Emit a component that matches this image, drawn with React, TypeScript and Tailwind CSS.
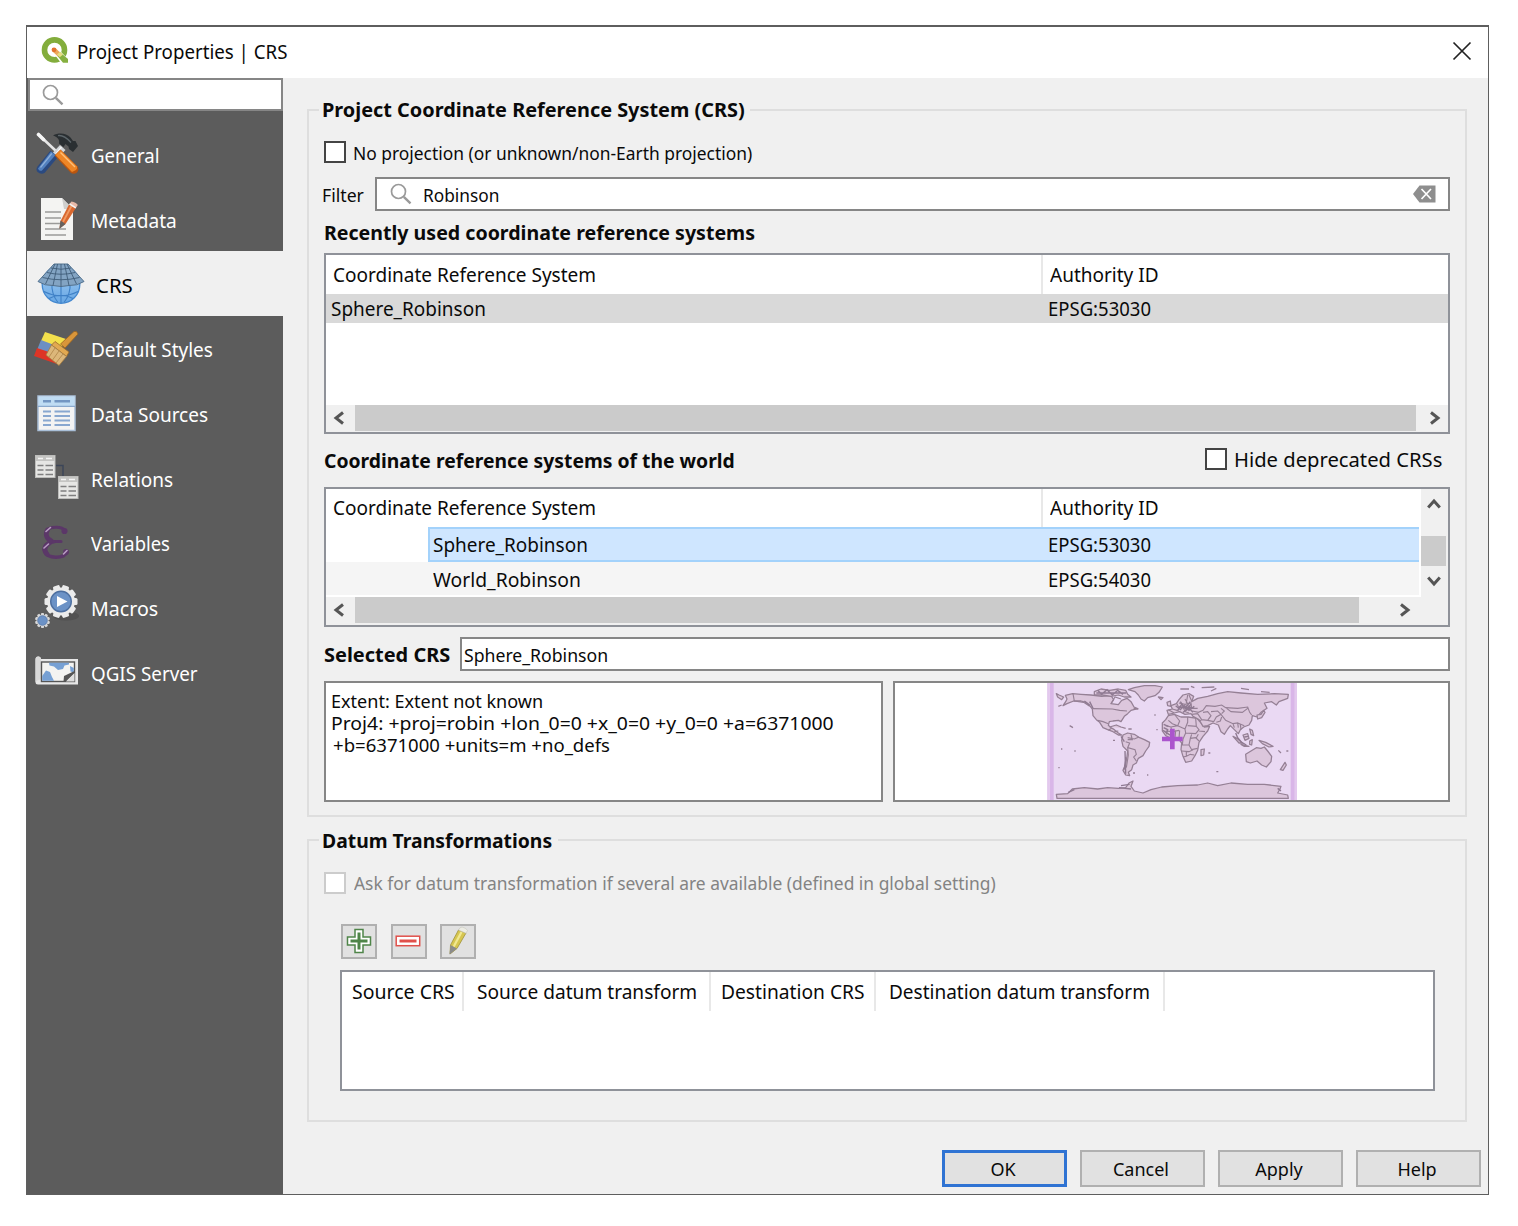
import React from "react";

/* ---------- shared pieces ---------- */

function T({ c = "", children }: { c?: string; children: React.ReactNode }) {
  return <span className={"inline-block origin-left whitespace-pre " + c}>{children}</span>;
}

function Magnifier() {
  return (
    <svg width="22" height="22" viewBox="0 0 22 22" fill="none" stroke="#9a9a9a">
      <circle cx="8.5" cy="8.5" r="7" strokeWidth="1.7" />
      <path d="M13.8 13.8 L20.5 20.3" strokeWidth="2.4" />
    </svg>
  );
}

function Chevron({ d }: { d: string }) {
  return (
    <svg width="14" height="14" viewBox="0 0 14 14" fill="none" stroke="#555" strokeWidth="3">
      <path d={d} />
    </svg>
  );
}
const LEFT = "M11 1.5 L4 7 L11 12.5";
const RIGHT = "M3 1.5 L10 7 L3 12.5";
const UP = "M1.2 10.5 L7 4 L12.8 10.5";
const DOWN = "M1.2 3.5 L7 10 L12.8 3.5";

/* ---------- icons ---------- */

function QgisLogo() {
  return (
    <svg width="28" height="28" viewBox="0 0 28 28">
      <circle cx="13.500" cy="12.900" r="10" fill="none" stroke="#83ad3c" strokeWidth="5.600" />
      <path d="M15 14 L19 14 L28 23 L28 26 L20 26 L14 18 Z" fill="#fff" />
      <path d="M15.500 17.800 L18.500 14.700 L27 22 L27 25.800 L22 25.800 Z" fill="#86b03f" />
      <path d="M11.500 11.500 L14.500 11 L20 16.500 L17 19.500 L11.500 14.500 Z" fill="#eda65a" />
      <circle cx="13" cy="12.800" r="2.400" fill="#e2722e" />
      <path d="M16 17.500 L19 14.800 L22 17.500 L18.800 20.300 Z" fill="#e6dd80" />
    </svg>
  );
}

function GeneralIcon() {
  return (
    <svg width="44" height="44" viewBox="0 0 44 44">
      <path d="M3 3 L20 19" stroke="#e6e6e6" strokeWidth="2.600" fill="none" strokeLinecap="round" />
      <path d="M2.500 2.500 L7.500 7.500" stroke="#f6f6f6" strokeWidth="3.600" strokeLinecap="round" />
      <path d="M24 13 L29.500 18 L22 26 L17 20.500 Z" fill="#d3d6d9" />
      <path d="M25.500 15 L20 22" stroke="#f4f5f6" strokeWidth="1.500" />
      <path d="M17 3.500 C23 .3 30 1 34.500 5.500 L37 9 L39.500 9 L42 14 L37 20 L33 17 L32.500 14.500 L29.500 12 L27.500 15 L23 11.500 C24 7 21 5 17 3.500 Z" fill="#2a2f32" />
      <path d="M22 3.600 C27 2.800 31 6 35 10.500" stroke="#5d666b" strokeWidth="1.300" fill="none" />
      <path d="M14.500 18.500 L22 25 L8.500 41 Q5 43 1.500 40 Q-.5 37.500 1.500 34.500 Z" fill="#2b4a80" />
      <path d="M15 19.500 L19.500 23 L6 38.500 Q3 39.500 2 36.500 Z" fill="#5280be" />
      <path d="M15.800 21.500 L4.500 35.500" stroke="#8fb0da" strokeWidth="1.200" />
      <path d="M18.500 23.500 L24.500 17.500 L41.500 34.500 Q43.500 37.500 41 40.500 Q38 42.800 35 41 Z" fill="#b9550f" />
      <path d="M19.500 23 L24.500 18 L41 34.500 Q41.500 36.500 40 38 L36 40 Z" fill="#ee8626" />
      <path d="M24.500 20.500 L39 35" stroke="#ffc079" strokeWidth="1.400" />
    </svg>
  );
}

function MetadataIcon() {
  return (
    <svg width="40" height="44" viewBox="0 0 40 44">
      <path d="M1 1 H22 L33 12 V43 H1 Z" fill="#f4f4f2" />
      <path d="M22 1 L33 12 H24 Z" fill="#cfcfcd" />
      <path d="M5 15 H21 M5 21 H21 M5 26.500 H21 M5 32 H26 M5 38 H26" stroke="#9b9b99" strokeWidth="1.500" />
      <path d="M29 7.500 L35.500 11.500 L25.500 27 L19.500 31.500 L20.500 24 Z" fill="#d9682f" />
      <path d="M31.500 9 L23 25" stroke="#f09a63" strokeWidth="1.800" />
      <path d="M20.500 23.500 L25.500 27 L19.300 32 Z" fill="#66625f" />
      <path d="M29 7.500 L31.500 4.500 Q36 5 37.800 8 L35.500 11.500 Z" fill="#e7b9a8" />
      <path d="M29.500 6.800 L35.800 10.900" stroke="#f3f3f3" strokeWidth="1.500" />
    </svg>
  );
}

function CrsIcon() {
  return (
    <svg width="48" height="42" viewBox="0 0 48 42">
      <defs>
        <linearGradient id="sphere" x1="0" y1="0" x2="0" y2="1">
          <stop offset="0" stopColor="#a9d0f3" />
          <stop offset="1" stopColor="#66a6e4" />
        </linearGradient>
      </defs>
      <circle cx="24" cy="21.500" r="18.800" fill="url(#sphere)" stroke="#4287cf" strokeWidth="1.300" />
      <path d="M24 18 V40 M15 19 Q14 31 21 39.500 M33 19 Q34 31 27 39.500 M7 28.500 Q24 37 41 28.500 M12 35.500 Q24 29 36 35.500" stroke="#3f80c6" strokeWidth="1.100" fill="none" />
      <path d="M17 1 H31 L47 18.500 Q40 23 32 22.500 Q24 24.500 16 22.500 Q8 23 1 18.500 Z" fill="#83a4c3" stroke="#53728f" strokeWidth="1" />
      <path d="M20.500 1 L16 22.500 M27.500 1 L32 22.500 M24 1 V23.500 M18 1 L8.500 21 M30 1 L39.500 21 M14 5 Q24 7.500 34 5 M10 9.500 Q24 13 38 9.500 M5.500 14.500 Q24 19 42.500 14.500" stroke="#3f5c78" strokeWidth=".9" fill="none" />
    </svg>
  );
}

function StylesIcon() {
  return (
    <svg width="46" height="36" viewBox="0 0 46 36">
      <path d="M12 2 L33 9 L28 19 L8 11 Z" fill="#f3e04c" />
      <path d="M8 10 L29 18 L22 28 L4 20 Z" fill="#6c8fc2" />
      <path d="M4 18 L22 24 L24 34 L1 26 Z" fill="#dd3526" />
      <path d="M43.500 1.500 L45 4 L32 18 L27.500 14 L41 1.500 Z" fill="#d9963a" stroke="#9a6420" strokeWidth=".8" />
      <path d="M22 11.500 L36 22 L33.500 26.500 L18.500 15 Z" fill="#e2a951" stroke="#9a6a28" strokeWidth=".8" />
      <path d="M18.500 15 L33.500 26.500 L26 35.500 L13 25 Z" fill="#dcb77a" stroke="#a67c40" strokeWidth=".8" />
      <path d="M22 18 L16 27 M26 21 L19.500 30 M30 24 L23 33" stroke="#b98f52" strokeWidth="1" />
    </svg>
  );
}

function DataIcon() {
  return (
    <svg width="40" height="37" viewBox="0 0 40 37">
      <rect x="1" y="1" width="37" height="34.500" fill="#f3f3f3" stroke="#a9bfd8" strokeWidth="1.500" />
      <rect x="1.500" y="1.500" width="36" height="9.500" fill="#bfdcf3" />
      <path d="M1 11.300 H38" stroke="#8aa9cd" strokeWidth="1.200" />
      <path d="M6 6.300 H14 M17.500 6.300 H33" stroke="#7396c2" strokeWidth="2.400" />
      <path d="M6 16.500 H14 M17.500 16.500 H33 M6 21 H14 M17.500 21 H33 M6 25.500 H14 M17.500 25.500 H33 M6 30 H14 M17.500 30 H33" stroke="#88a7d0" strokeWidth="1.900" />
    </svg>
  );
}

function MiniTable({ x, y }: { x: number; y: number }) {
  return (
    <g transform={`translate(${x} ${y})`}>
      <rect x=".5" y=".5" width="19.500" height="22" fill="#e6e6e4" stroke="#bdbdbb" />
      <rect x="1" y="1" width="18.500" height="5" fill="#c4c4c2" />
      <path d="M3 3.500 H8 M11 3.500 H17" stroke="#f4f4f4" strokeWidth="1.600" />
      <path d="M2.500 10.500 H8.500 M10.500 10.500 H18 M2.500 15 H8.500 M10.500 15 H18 M2.500 19.500 H8.500 M10.500 19.500 H18" stroke="#7f7f7f" strokeWidth="1.500" />
    </g>
  );
}

function RelationsIcon() {
  return (
    <svg width="44" height="45" viewBox="0 0 44 45">
      <path d="M21 10.500 H28 V21" stroke="#3c4658" strokeWidth="1.500" fill="none" />
      <MiniTable x={0} y={0} />
      <MiniTable x={23} y={21} />
    </svg>
  );
}

function VariablesIcon() {
  return (
    <svg width="28" height="35" viewBox="0 0 28 35" fill="none" strokeLinecap="round">
      <path d="M23 5.500 C20 1.500 9 1 5.500 5 C2.500 10 6 16 12 16.500 H19" stroke="#5b3768" strokeWidth="3.200" />
      <path d="M12 16.800 C5 17 .5 22 2.500 26.500 C5.500 34 22 34 25 27" stroke="#5b3768" strokeWidth="3.400" />
      <path d="M5.500 5 C3 9 4.500 13.500 8.500 15.500 M7.500 18 C3 20.500 1.500 25 5 29" stroke="#5b3768" strokeWidth="4.800" />
      <circle cx="22.500" cy="6" r="3.100" fill="#5b3768" />
      <circle cx="24" cy="27" r="2.900" fill="#5b3768" />
      <path d="M4 6.500 L8.500 2.500 M2 23 L6.500 19 M21.500 29 L25 25.500" stroke="#b79bc2" strokeWidth="1.600" />
    </svg>
  );
}

function MacrosIcon() {
  const teeth = [0, 36, 72, 108, 144, 180, 216, 252, 288, 324];
  return (
    <svg width="46" height="46" viewBox="0 0 46 46">
      <ellipse cx="31" cy="32" rx="13" ry="4.500" fill="#4a4a4a" opacity=".6" />
      {teeth.map((a) => (
        <rect key={a} x="22.500" y="1" width="7" height="8" rx="1.500" fill="#ebebeb" transform={`rotate(${a + 18} 26 17.500)`} />
      ))}
      <circle cx="26" cy="17.500" r="14" fill="#ebebeb" />
      <circle cx="26" cy="17.500" r="10.300" fill="#6c92c6" stroke="#4d6fa0" strokeWidth="1.400" />
      <path d="M22 12 L32.500 17.500 L22 23 Z" fill="#fff" />
      {teeth.map((a) => (
        <rect key={a} x="6" y="29" width="3" height="4" rx=".8" fill="#d8d8d8" transform={`rotate(${a} 7.500 36.500)`} />
      ))}
      <circle cx="7.500" cy="36.500" r="6" fill="#d8d8d8" />
      <circle cx="7.500" cy="36.500" r="4.800" fill="#6c92c6" stroke="#5577a8" strokeWidth=".8" />
    </svg>
  );
}

function ServerIcon() {
  return (
    <svg width="44" height="31" viewBox="0 0 44 31">
      <path d="M5 3 H43 V28.500 H3 Q.5 28.500 .5 26 V3.500 Q.5 .5 3.200 .5 Q6 .5 6 3.500 Z" fill="#e7e7e7" />
      <path d="M3.200 .5 Q6 .5 6 3.500 V23.500 Q3 23 .5 26 V3.500 Q.5 .5 3.200 .5" fill="#d9d9d9" />
      <rect x="6.500" y="6" width="33" height="19.500" fill="#f3f3f1" stroke="#555" strokeWidth="1.400" />
      <path d="M14 6.700 H34 V8.500 L29.500 9.500 L28 13 L23 14 L19 10.500 L14.500 9.500 Z M7.200 24.800 V20 L11 14.500 L15 16 L17 21 L19 24.800 Z M35 10 L38.800 12 V16.500 L35.500 15.500 Z" fill="#76a0d4" />
      <path d="M28.500 25.500 L29 20 L39.500 15 V17.500 L31 25.500 Z" fill="#555" />
      <path d="M39.500 17 V25.500 H31 Z" fill="#dedede" />
    </svg>
  );
}

/* ---------- world overview ---------- */

const LAND = [
  "M103 73 L125 68 L150 70 L180 72 L212 76 L240 74 L248 86 L240 98 L262 101 L272 88 L288 82 L300 92 L309 108 L320 113 L300 118 L290 128 L280 136 L270 152 L262 148 L246 150 L235 152 L232 163 L240 170 L250 176 L262 186 L272 192 L262 192 L246 182 L230 176 L216 170 L206 154 L196 146 L186 134 L184 114 L176 104 L164 94 L150 90 L128 90 L108 98 L96 104 L104 92 L108 84 Z",
  "M76 68 L84 72 L98 78 L92 86 L80 78 Z",
  "M292 56 L310 50 L340 44 L372 44 L394 48 L384 64 L372 74 L350 80 L340 90 L330 84 L322 72 L312 62 Z",
  "M190 62 L210 54 L236 58 L262 54 L284 58 L290 70 L300 78 L280 78 L262 72 L240 76 L214 72 L190 72 Z",
  "M276 192 L290 186 L310 190 L326 200 L340 206 L356 214 L354 226 L344 240 L336 254 L322 262 L316 276 L306 282 L302 296 L292 304 L296 314 L284 312 L276 298 L284 280 L288 256 L290 240 L276 226 L272 208 Z",
  "M394 156 L404 146 L412 134 L430 130 L450 138 L472 138 L498 142 L512 158 L520 168 L536 166 L530 180 L516 196 L504 214 L500 238 L492 254 L482 270 L464 274 L456 256 L450 236 L452 216 L444 206 L420 202 L404 194 L394 180 Z",
  "M412 130 L408 118 L424 114 L420 104 L436 98 L444 86 L456 72 L474 68 L488 76 L482 92 L500 82 L530 76 L560 68 L590 62 L630 66 L680 70 L730 68 L772 70 L770 82 L744 92 L736 102 L722 92 L700 96 L708 112 L690 124 L678 138 L664 134 L662 148 L654 162 L638 168 L628 176 L622 188 L610 176 L598 164 L590 174 L580 190 L570 182 L562 162 L546 156 L530 164 L516 166 L504 146 L486 136 L480 128 L462 130 L446 122 L430 126 Z",
  "M644 250 L660 240 L676 230 L690 232 L700 228 L710 240 L722 256 L720 272 L706 288 L692 282 L678 270 L658 276 L646 272 Z",
  "M76 370 L110 368 L124 354 L160 350 L200 354 L230 350 L262 352 L284 350 L294 336 L306 330 L300 346 L310 360 L336 366 L360 356 L392 348 L440 344 L500 342 L530 336 L560 344 L600 336 L650 340 L700 340 L750 346 L746 356 L740 366 L770 372 L772 382 L78 382 Z",
];
const ISLES = [
  "M606 196 L618 202 L634 216 L624 216 Z",
  "M636 192 L650 188 L654 202 L642 208 Z",
  "M630 220 L654 226 L640 226 Z",
  "M656 210 L664 206 L662 222 L656 220 Z",
  "M684 208 L704 214 L726 226 L714 228 L694 218 Z",
  "M656 174 L664 178 L668 194 L660 190 Z",
  "M678 132 L690 130 L698 118 L702 124 L692 140 L680 144 Z",
  "M510 236 L520 234 L518 252 L510 254 Z",
  "M762 274 L766 282 L756 298 L748 296 Z",
  "M408 94 L418 90 L420 106 L410 104 Z",
  "M382 78 L396 80 L390 86 Z",
  "M236 168 L256 162 L270 168 L284 172 M292 174 L302 174",
  "M448 54 H474 M512 50 L550 48 M540 60 L556 52 M630 52 L654 56 M690 62 L716 64 M480 46 L490 50",
  "M82 106 L92 102 M116 164 L126 170 M90 234 H94 M130 240 H134 M82 290 H86 M246 208 H252 M306 306 H312 M350 310 V314 M370 132 H374 M376 176 H380 M532 246 H538 M556 302 H562 M742 238 L750 246 M766 240 H772 M308 112 L322 114",
];
const BORDERS =
  "M126 68 L130 90 L158 94 L176 106 M186 113 L244 114 L266 118 L288 120 M200 148 L216 152 L232 158 M242 172 L232 178 M250 182 L262 180 M240 98 L252 78 L270 84 M290 200 L310 204 L324 198 M284 212 L296 216 L290 230 L312 236 L316 250 L308 258 L316 270 M290 230 L292 252 L286 290 M300 190 L304 206 L290 206 M404 164 L420 168 L440 164 L446 150 L432 132 M412 148 L424 158 L440 164 L462 174 L470 154 L470 138 M470 164 L496 166 L494 142 M462 174 L464 186 L494 188 L504 176 L496 166 M446 178 L444 202 M420 168 L424 196 M434 178 L432 200 M404 180 L424 182 L444 178 M464 186 L456 204 L454 222 L474 222 L478 202 L494 200 L504 210 M478 202 L482 190 M474 222 L482 236 L500 232 M452 240 L474 242 L486 236 M466 242 L466 256 L456 258 M466 256 L478 250 L490 252 M504 180 L522 182 M496 200 L502 190 M412 116 L430 126 M424 114 L438 118 L446 122 M438 98 L444 112 L456 108 L462 122 L474 126 M456 108 L470 104 L484 112 L500 112 M444 96 L462 100 L480 96 L482 112 M462 84 L470 98 M470 72 L466 96 M474 72 L482 90 M484 120 L502 124 L516 118 L526 104 L552 106 L572 102 L584 110 L620 112 L650 108 L656 124 L662 132 M482 130 L500 128 L512 146 L530 148 L540 134 L530 122 L516 124 M512 146 L504 152 M530 148 L548 152 L556 138 L570 130 L560 120 L540 122 M570 130 L584 148 L606 158 L620 156 L622 170 M570 112 L580 120 L572 128 M584 110 L600 122 L634 124 L650 112 M556 154 L568 150 L572 138 M606 158 L610 170 M620 156 L640 164 M628 160 L630 176";
const DENSE =
  "M434 104 L448 116 L460 104 L474 118 L490 106 M440 118 L452 100 L466 116 L480 100 M448 92 L462 112 L478 92 M456 124 L474 112 L486 124 M444 108 L486 110 M614 186 L620 200 L632 214 L646 222 M640 198 L652 196 M398 160 L412 166 M398 170 L410 176 L406 190 M396 178 L414 190 L428 198 M176 92 L186 112 M160 90 L176 102 M196 66 L286 66 M200 58 L212 70 L228 56 L244 72 L260 58 L276 70 M282 240 L284 308 M284 258 L280 296 M270 196 L280 212 M112 364 L130 356 M264 350 L300 354 M270 344 L296 340 M740 352 L750 360";

function WorldMap() {
  return (
    <svg width="250" height="117" viewBox="48 36 750 351" preserveAspectRatio="none" className="block">
      <rect x="48" y="36" width="750" height="354" fill="#ead9f3" />
      <path d="M62 36 V390 M785 36 V390" stroke="#d9b6e8" strokeWidth="12" />
      <path d="M52 36 V390 M795 36 V390" stroke="#e3c9ee" strokeWidth="6" />
      <g fill="#dcc6dc" stroke="#958095" strokeWidth="3.800" strokeLinejoin="round">
        {LAND.map((d) => (
          <path key={d} d={d} />
        ))}
        {ISLES.map((d) => (
          <path key={d} d={d} />
        ))}
      </g>
      <path d={BORDERS} fill="none" stroke="#958095" strokeWidth="3.400" />
      <path d={DENSE} fill="none" stroke="#8f7a92" strokeWidth="4.200" />
      <path d="M424 173 V235 M393 204 H455" stroke="#ab55cd" strokeWidth="14" />
    </svg>
  );
}

/* ---------- sidebar ---------- */

type Item = { label: string; scale: string; icon: React.ReactNode; pad: string; active?: boolean };
const ITEMS: Item[] = [
  { label: "General", scale: "scale-x-[0.93]", icon: <GeneralIcon />, pad: "pl-[9px]" },
  { label: "Metadata", scale: "scale-x-[0.955]", icon: <MetadataIcon />, pad: "pl-[13px]" },
  { label: "CRS", scale: "scale-x-[1.02]", icon: <CrsIcon />, pad: "pl-[10px]", active: true },
  { label: "Default Styles", scale: "scale-x-[0.95]", icon: <StylesIcon />, pad: "pl-[6px]" },
  { label: "Data Sources", scale: "scale-x-[0.95]", icon: <DataIcon />, pad: "pl-[10px]" },
  { label: "Relations", scale: "scale-x-[0.95]", icon: <RelationsIcon />, pad: "pl-[8px]" },
  { label: "Variables", scale: "scale-x-[0.92]", icon: <VariablesIcon />, pad: "pl-[15px]" },
  { label: "Macros", scale: "scale-x-[0.98]", icon: <MacrosIcon />, pad: "pl-[8px]" },
  { label: "QGIS Server", scale: "scale-x-[0.94]", icon: <ServerIcon />, pad: "pl-[8px]" },
];

function Sidebar() {
  return (
    <nav className="flex w-[256px] flex-col bg-[#5c5c5c]">
      <div className="ml-px flex h-[33px] items-center border-2 border-[#868686] bg-white pl-[12px]">
        <Magnifier />
      </div>
      <div className="mt-[11px] flex flex-col text-[20px]">
        {ITEMS.map((it) => (
          <div key={it.label} className={"flex h-[64.7px] items-center " + (it.active ? "bg-[#f0f0f0] text-black" : "text-white")}>
            <div className={"flex shrink-0 items-center " + (it.active ? "w-[69px] " : "w-[64px] ") + it.pad}>{it.icon}</div>
            <T c={"pt-[4px] " + it.scale}>{it.label}</T>
          </div>
        ))}
      </div>
    </nav>
  );
}

/* ---------- controls ---------- */

function Check({ disabled }: { disabled?: boolean }) {
  return <span className={"h-[22px] w-[22px] shrink-0 border-2 bg-white " + (disabled ? "border-[#cccccc]" : "border-[#444444]")} />;
}

function HBar({ thumb, tail }: { thumb: string; tail: string }) {
  return (
    <div className="flex h-[27px] items-start bg-[#f0f0f0]">
      <div className="flex h-[26px] w-[29px] items-center pl-[6px]">
        <Chevron d={LEFT} />
      </div>
      <div className={"h-[26px] bg-[#cbcbcb] " + thumb} />
      <div className={"flex h-[26px] items-center " + tail}>
        <Chevron d={RIGHT} />
      </div>
    </div>
  );
}

function TreeHeader({ h }: { h: string }) {
  return (
    <div className={"flex shrink-0 items-center " + h}>
      <div className="flex h-full w-[717px] items-center border-r-2 border-[#e8e8e8] pl-[7px]">
        <T c="scale-x-[0.95]">Coordinate Reference System</T>
      </div>
      <div className="pl-[7px]">
        <T c="scale-x-[0.95]">Authority ID</T>
      </div>
    </div>
  );
}

function DialogButton({ label, primary }: { label: string; primary?: boolean }) {
  return (
    <button className={"flex h-[37px] w-[125px] items-center justify-center bg-[#e1e1e1] pr-[3px] " + (primary ? "border-[3px] border-[#2f73d3]" : "border-2 border-[#b0b0b0]")}>
      {label}
    </button>
  );
}

function ToolButton({ children }: { children: React.ReactNode }) {
  return <button className="flex h-[35px] w-[36px] items-center justify-center border-2 border-[#b0b0b0] bg-[#e1e1e1] pr-px pb-px">{children}</button>;
}

/* ---------- page ---------- */

export default function App() {
  return (
    <div className="h-[1226px] w-[1518px] bg-white pt-[25px] pl-[26px] font-['Noto_Sans','Open_Sans',sans-serif] text-[18px] leading-[22px] text-[#0a0a0a]">
      <div className="flex h-[1170px] w-[1463px] flex-col border border-t-2 border-[#5e5e5e]">
        <header className="flex h-[51px] shrink-0 items-center bg-white pb-[3px] pl-[14px] text-[20px]">
          <QgisLogo />
          <T c="ml-[8px] scale-x-[0.935] pt-px">Project Properties | CRS</T>
          <svg width="20" height="20" viewBox="0 0 20 20" className="mr-[16px] ml-auto" stroke="#222" strokeWidth="1.700">
            <path d="M1.500 1.500 L18.500 18.500 M18.500 1.500 L1.500 18.500" />
          </svg>
        </header>

        <div className="flex min-h-0 flex-1">
          <Sidebar />

          <main className="flex flex-1 flex-col bg-[#f0f0f0] pt-[21px] pl-[24px]">
            <fieldset className="h-[718px] w-[1160px] border-2 border-[#dedede] pl-[15px]">
              <legend className="ml-[-5px] h-[22px] w-[431px] pl-[3px] text-[19px] font-bold">
                <T c="scale-x-[1.046]">Project Coordinate Reference System (CRS)</T>
              </legend>

              <div className="mt-[13px] flex h-[36px] items-center">
                <Check />
                <T c="ml-[7px] scale-x-[0.966] pt-px">No projection (or unknown/non-Earth projection)</T>
              </div>

              <div className="mt-[7px] flex h-[34px] items-center">
                <T c="w-[51px] scale-x-[0.98] pt-[2px] -ml-[2px]">Filter</T>
                <div className="ml-[2px] flex h-full w-[1075px] items-center border-2 border-[#868686] bg-white pl-[13px]">
                  <Magnifier />
                  <T c="ml-[11px] scale-x-[0.96] pt-[2px]">Robinson</T>
                  <svg width="23" height="18" viewBox="0 0 23 18" className="mr-[12px] ml-auto">
                    <path d="M0 9 L6.500 .5 H22.500 V17.500 H6.500 Z" fill="#8e8e8e" />
                    <path d="M8.500 4 L18 14 M18 4 L8.500 14" stroke="#fff" strokeWidth="1.700" />
                  </svg>
                </div>
              </div>

              <div className="flex h-[42px] items-center pt-px text-[19px] font-bold">
                <T c="scale-x-[1.03]">Recently used coordinate reference systems</T>
              </div>

              <div className="flex h-[181px] w-[1126px] flex-col border-2 border-[#8f9299] bg-white text-[20px]">
                <TreeHeader h="h-[39px]" />
                <div className="flex h-[29px] items-center bg-[#d9d9d9] pl-[5px]">
                  <div className="w-[717px]">
                    <T c="scale-x-[0.948]">Sphere_Robinson</T>
                  </div>
                  <T c="scale-x-[0.925]">EPSG:53030</T>
                </div>
                <div className="mt-auto">
                  <HBar thumb="w-[1061px]" tail="pl-[12px]" />
                </div>
              </div>

              <div className="flex h-[53px] w-[1126px] items-center text-[19px]">
                <T c="scale-x-[1.017] font-bold">Coordinate reference systems of the world</T>
                <div className="mr-[10px] ml-auto flex items-center pb-[4px] text-[20px]">
                  <Check />
                  <T c="ml-[7px] scale-x-[1.01] pt-[3px]">Hide deprecated CRSs</T>
                </div>
              </div>

              <div className="flex h-[140px] w-[1126px] flex-col border-2 border-[#8f9299] bg-white text-[20px]">
                <div className="flex h-[108px]">
                  <div className="flex w-[1093px] flex-col">
                    <TreeHeader h="h-[38px]" />
                    <div className="ml-[102px] flex h-[35px] items-center border-2 border-[#a3d2fb] border-r-0 bg-[#cfe6ff] pl-[3px]">
                      <div className="w-[615px] pt-px">
                        <T c="scale-x-[0.948]">Sphere_Robinson</T>
                      </div>
                      <T c="scale-x-[0.925] pt-px">EPSG:53030</T>
                    </div>
                    <div className="flex h-[33px] items-center bg-[#f5f5f5] pl-[107px]">
                      <div className="w-[615px] pt-[2px]">
                        <T c="scale-x-[0.965]">World_Robinson</T>
                      </div>
                      <T c="scale-x-[0.925] pt-[2px]">EPSG:54030</T>
                    </div>
                  </div>
                  <div className="ml-[2px] flex flex-1 flex-col items-center bg-[#f0f0f0] pt-[8px] pr-[2px]">
                    <Chevron d={UP} />
                    <div className="mt-[25px] mb-[8px] h-[30px] w-[25px] bg-[#cbcbcb]" />
                    <Chevron d={DOWN} />
                  </div>
                </div>
                <HBar thumb="w-[1004px]" tail="pl-[39px]" />
                <div className="flex-1 bg-[#f0f0f0]" />
              </div>

              <div className="mt-[10px] flex h-[34px] items-center">
                <T c="w-[136px] scale-x-[1.05] text-[19px] font-bold pt-[2px]">Selected CRS</T>
                <div className="flex h-full w-[990px] items-center border-2 border-[#868686] bg-white pl-[2px]">
                  <T c="scale-x-[0.98] pt-[2px]">Sphere_Robinson</T>
                </div>
              </div>

              <div className="mt-[10px] flex h-[121px] gap-[10px]">
                <div className="flex w-[559px] flex-col border-2 border-[#868686] bg-white pt-[7px] pl-[5px]">
                  <T c="scale-x-[1.003]">Extent: Extent not known</T>
                  <T c="scale-x-[1.077]">Proj4: +proj=robin +lon_0=0 +x_0=0 +y_0=0 +a=6371000</T>
                  <T c="scale-x-[1.03] pl-[2px]">+b=6371000 +units=m +no_defs</T>
                </div>
                <div className="flex w-[557px] border-2 border-[#868686] bg-white pl-[152px]">
                  <WorldMap />
                </div>
              </div>
            </fieldset>

            <fieldset className="mt-[12px] h-[293px] w-[1160px] border-2 border-[#dedede] pl-[15px]">
              <legend className="ml-[-5px] h-[22px] w-[239px] pt-px pl-[3px] text-[19px] font-bold">
                <T c="scale-x-[1.018]">Datum Transformations</T>
              </legend>

              <div className="mt-[14px] flex h-[36px] items-center text-[#838383]">
                <Check disabled />
                <T c="ml-[8px] scale-x-[0.967]">Ask for datum transformation if several are available (defined in global setting)</T>
              </div>

              <div className="mt-[23px] ml-[17px] flex gap-[13.500px]">
                <ToolButton>
                  <svg width="26" height="26" viewBox="0 0 26 26" fill="none" stroke="#4f8549">
                    <path d="M9 1.500 H17 V9 H24.500 V17 H17 V24.500 H9 V17 H1.500 V9 H9 Z" fill="#fff" strokeWidth="1.500" />
                    <path d="M13 4.500 V21.500 M4.500 13 H21.500" strokeWidth="3" />
                  </svg>
                </ToolButton>
                <ToolButton>
                  <svg width="26" height="12" viewBox="0 0 26 12" fill="#fff" stroke="#e0504b">
                    <rect x="1.200" y="1.200" width="23.500" height="9.500" strokeWidth="1.500" />
                    <path d="M4.500 6 H21.500" strokeWidth="3" />
                  </svg>
                </ToolButton>
                <ToolButton>
                  <svg width="24" height="30" viewBox="0 0 24 30">
                    <path d="M12.500 4 L20 7 L11 22.500 L4 28 L4.500 19 Z" fill="#d6c650" stroke="#a0923a" strokeWidth=".8" />
                    <path d="M15.500 6 L7.500 21" stroke="#f1e891" strokeWidth="2.200" />
                    <path d="M4.500 19 L11 22.500 L3.500 28.500 Z" fill="#8b8b8b" />
                    <path d="M12.500 4 Q13.500 1.300 16 1 Q20.500 2 21.500 4.500 L20 7.300 Z" fill="#ecece4" stroke="#c4c4bb" strokeWidth=".6" />
                  </svg>
                </ToolButton>
              </div>

              <div className="mt-[11px] ml-[16px] h-[121px] w-[1095px] border-2 border-[#8f9299] bg-white text-[20px]">
                <div className="flex h-[39px]">
                  <div className="flex w-[122px] items-center border-r-2 border-[#e8e8e8] pl-[10px]">
                    <T c="scale-x-[0.975]">Source CRS</T>
                  </div>
                  <div className="flex w-[247px] items-center border-r-2 border-[#e8e8e8] pl-[13px]">
                    <T c="scale-x-[0.955]">Source datum transform</T>
                  </div>
                  <div className="flex w-[165px] items-center border-r-2 border-[#e8e8e8] pl-[10px]">
                    <T c="scale-x-[0.96]">Destination CRS</T>
                  </div>
                  <div className="flex w-[289px] items-center border-r-2 border-[#e8e8e8] pl-[13px]">
                    <T c="scale-x-[0.95]">Destination datum transform</T>
                  </div>
                </div>
              </div>
            </fieldset>

            <footer className="mt-[28px] mr-[7px] flex justify-end gap-[13px]">
              <DialogButton label="OK" primary />
              <DialogButton label="Cancel" />
              <DialogButton label="Apply" />
              <DialogButton label="Help" />
            </footer>
          </main>
        </div>
      </div>
    </div>
  );
}
